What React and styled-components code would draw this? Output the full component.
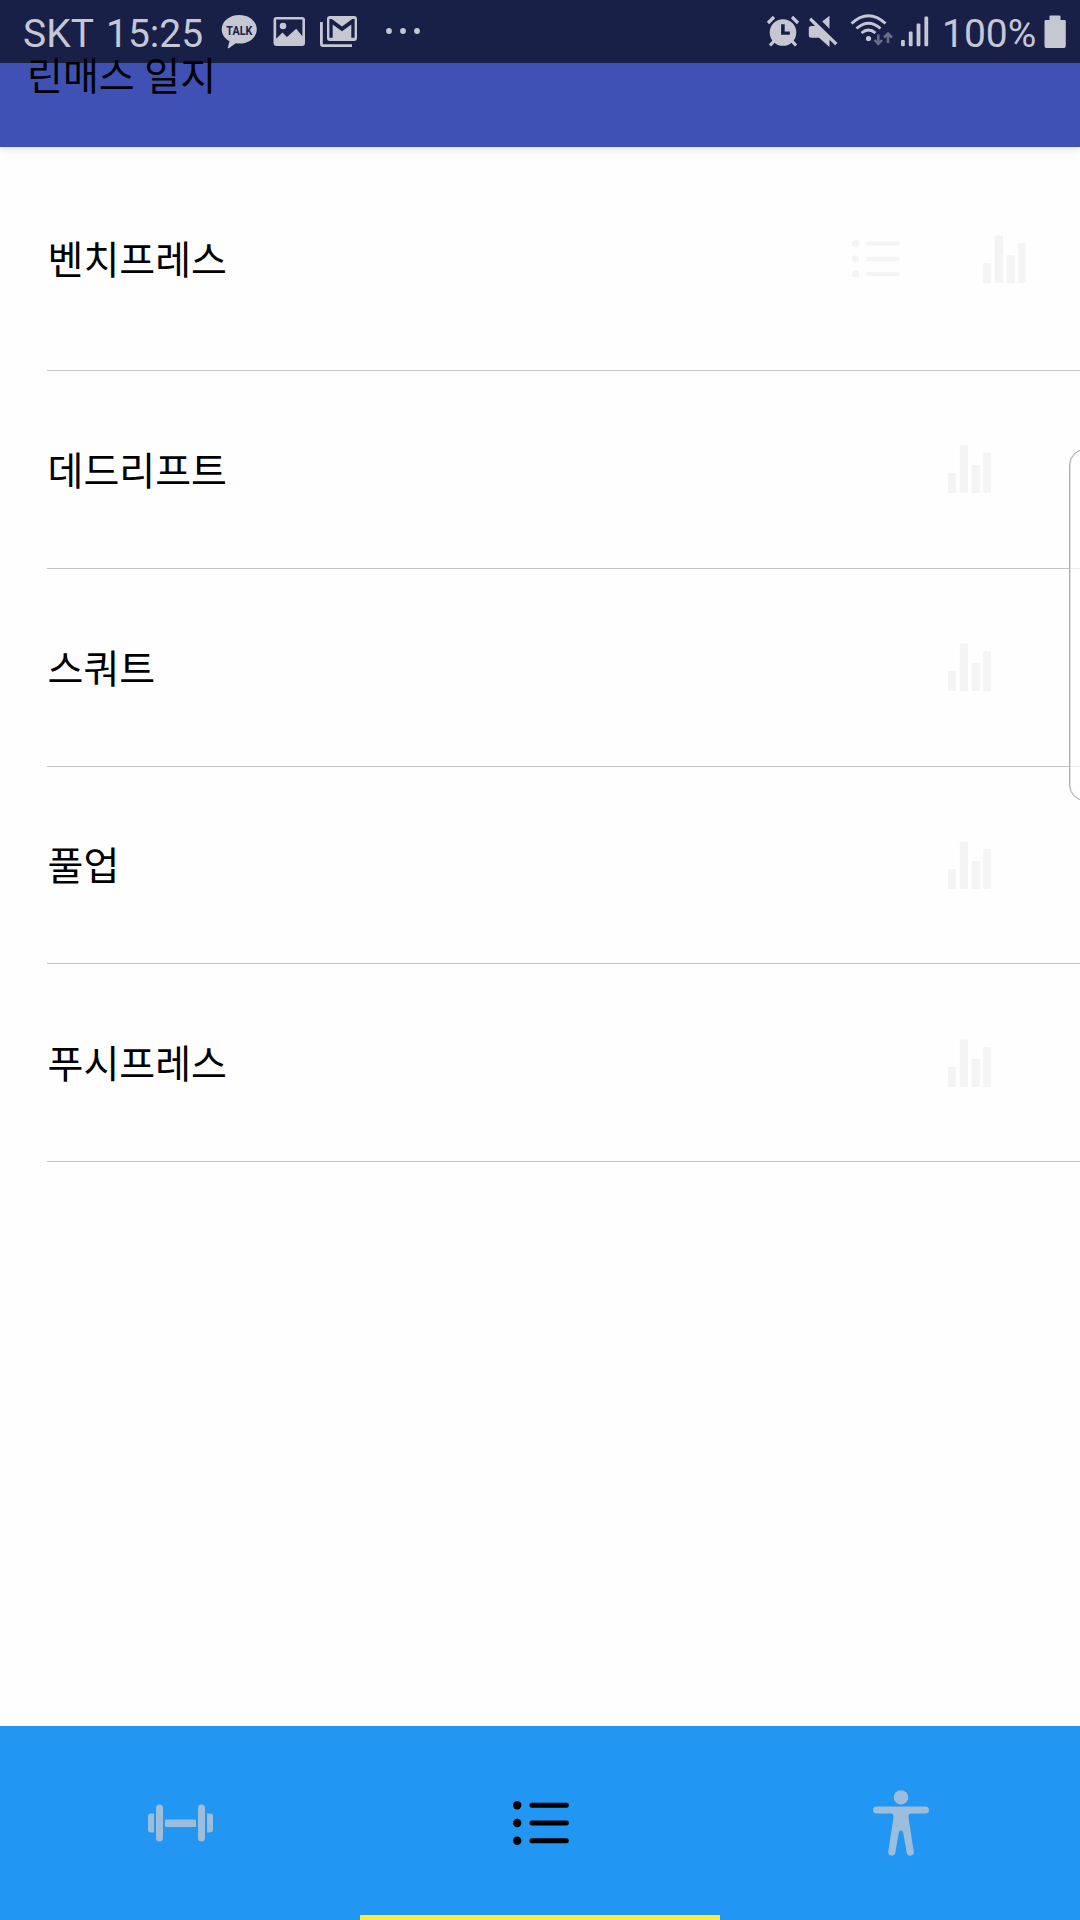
import React from "react";
import styled, { createGlobalStyle } from "styled-components";

const GlobalStyle = createGlobalStyle`
  * { box-sizing: border-box; }
  body { margin: 0; background: #fefefe; }
`;

const Screen = styled.div`
  position: relative;
  width: 1080px;
  height: 1920px;
  overflow: hidden;
  display: flex;
  flex-direction: column;
  background: #fefefe;
  color: #000;
  font-family: Roboto, "Noto Sans CJK KR", sans-serif;
`;

const StatusBar = styled.div`
  position: absolute;
  inset: 0 0 auto 0;
  z-index: 2;
  height: 63px;
  padding: 0 14px 0 23px;
  display: flex;
  justify-content: space-between;
  background: rgba(0, 0, 0, 0.6);
  color: #c5c7d3;
`;

const StatusGroup = styled.div`
  display: flex;
  align-items: flex-start;
`;

const StatusText = styled.span`
  width: ${(p) => p.$width}px;
  font-size: 39px;
  line-height: 46px;
  padding-top: 11px;
  white-space: nowrap;
`;

const StatusIcon = styled.svg`
  display: block;
  flex: none;
  height: 63px;
  width: ${(p) => p.$width}px;
  margin-left: ${(p) => p.$gap || 0}px;
  fill: currentColor;
`;

const Header = styled.header`
  position: relative;
  flex: none;
  height: 147px;
  padding: 48px 27px 0;
  background: #3f51b5;
  box-shadow: 0 2px 8px rgba(0, 0, 0, 0.12);
`;

const Title = styled.h1`
  margin: 0;
  font-size: 39px;
  line-height: 58px;
  font-weight: 400;
  white-space: nowrap;
`;

const List = styled.ul`
  flex: 1;
  margin: 0;
  padding: 0 0 0 47px;
  list-style: none;
`;

const Row = styled.li`
  display: flex;
  align-items: center;
  justify-content: space-between;
  height: ${(p) => (p.$first ? 224 : 197.75)}px;
  padding-right: ${(p) => (p.$first ? 54 : 89)}px;
  border-bottom: 1px solid #c4c4c4;
`;

const RowName = styled.span`
  padding: 5px 0 0 0.5px;
  font-size: 39px;
  line-height: 58px;
  font-weight: 400;
`;

const RowActions = styled.div`
  display: flex;
  align-items: center;
  gap: 83px;
  color: #f4f4f4;
`;

const Glyph = styled.svg`
  display: block;
  fill: currentColor;
`;

const EdgePanel = styled.div`
  position: absolute;
  z-index: 3;
  left: 1069px;
  top: 449px;
  width: 32px;
  height: 352px;
  border: 1px solid #acacac;
  border-radius: 16px;
  background: rgba(255, 255, 255, 0.7);
  box-shadow: inset 1px 0 0 #e2e2e2;
`;

const TabBar = styled.nav`
  flex: none;
  display: grid;
  grid-template-columns: repeat(3, 1fr);
  height: 194px;
  background: #2196f3;
`;

const Tab = styled.div`
  display: flex;
  align-items: center;
  justify-content: center;
  color: ${(p) => (p.$active ? "#000" : "#9cbddb")};
  padding: 5px 0 0 1px;
  border-bottom: 5px solid ${(p) => (p.$active ? "#ffeb3b" : "transparent")};
`;

const ListGlyph = ({ width, height }) => (
  <Glyph width={width} height={height} viewBox="0 0 56 44">
    {[4.2, 22, 39.8].map((y) => (
      <React.Fragment key={y}>
        <circle cx="4.2" cy={y} r="4.2" />
        <rect x="16.5" y={y - 2.5} width="39.3" height="5" rx="2.2" />
      </React.Fragment>
    ))}
  </Glyph>
);

const StatsGlyph = () => (
  <Glyph width="43" height="48" viewBox="0 0 43 48">
    <rect x="0" y="28" width="8" height="20" rx="1" />
    <rect x="11.8" y="0.4" width="8.2" height="47.6" rx="1" />
    <rect x="23.6" y="20" width="8.2" height="28" rx="1" />
    <rect x="35.2" y="8" width="7.8" height="40" rx="1" />
  </Glyph>
);

const DumbbellGlyph = () => (
  <Glyph width="65" height="38" viewBox="0 0 65 38">
    <path d="M6 9.5H3a3 3 0 0 0-3 3v13a3 3 0 0 0 3 3h3zM59 9.5h3a3 3 0 0 1 3 3v13a3 3 0 0 1-3 3h-3z" />
    <rect x="8" y="0.5" width="7" height="37" rx="3.5" />
    <rect x="50" y="0.5" width="7" height="37" rx="3.5" />
    <rect x="17" y="15.5" width="31" height="7.4" rx="1" />
  </Glyph>
);

const BodyGlyph = () => (
  <Glyph width="56" height="66" viewBox="0 0 56 66">
    <circle cx="28" cy="7.4" r="7.2" />
    <path d="M3.5 16.5h49a3.5 3.5 0 0 1 0 7H38.5c-2.5 0-3.2 1.6-3 4l5.3 34.2a3.6 3.6 0 0 1-7.1 1.1L30.2 43c-.5-3.4-3.9-3.4-4.4 0l-3.5 19.8a3.6 3.6 0 0 1-7.1-1.1L20.5 27.5c.2-2.4-.5-4-3-4H3.5a3.5 3.5 0 0 1 0-7z" />
  </Glyph>
);

const exercises = ["벤치프레스", "데드리프트", "스쿼트", "풀업", "푸시프레스"];

export default function App() {
  return (
    <Screen>
      <GlobalStyle />
      <StatusBar>
        <StatusGroup>
          <StatusText $width={83}>SKT</StatusText>
          <StatusText $width={113}>15:25</StatusText>
          <StatusIcon $width={40} viewBox="219 0 40 63">
            <path d="M239.3 15c-9.8 0-17.6 6.3-17.6 14.3 0 5.2 3.1 9.6 7.8 12l-1.7 6.2c-.2.7.5 1.1 1 .7l7-4.9c1.1.2 2.3.3 3.5.3 9.8 0 17.5-6.3 17.5-14.3S249.1 15 239.3 15z" />
            <text x="239.3" y="34.5" textAnchor="middle" textLength="26" lengthAdjust="spacingAndGlyphs" fontSize="12.5" fontWeight="700" fill="#192048">TALK</text>
          </StatusIcon>
          <StatusIcon $width={32} $gap={14} viewBox="273 0 32 63">
            <path fillRule="evenodd" d="M276.5 17h25.5a3 3 0 0 1 3 3v23a3 3 0 0 1-3 3h-25.5a3 3 0 0 1-3-3V20a3 3 0 0 1 3-3zm-.3 2.5v19.3l6.3-6.3 4.5 4.5 9.2-8.2 6.2 7.5V19.5zM283 22.7a3.3 3.3 0 1 1 0 6.600 3.300 3.300 0 0 1 0-6.600z" />
          </StatusIcon>
          <StatusIcon $width={38} $gap={15} viewBox="320 0 38 63">
            <path d="M320 22h2.8v22.2h29.200V47h-29a3 3 0 0 1-3-3z" />
            <path fillRule="evenodd" d="M330 16h24a3 3 0 0 1 3 3v19a3 3 0 0 1-3 3h-24a3 3 0 0 1-3-3V19a3 3 0 0 1 3-3zm-.6 3v18.8h3.3V24.5l9.3 6.7 9.3-6.7v13.3h3.3V19h-2.3L342 26.5 331.7 19z" />
          </StatusIcon>
          <StatusIcon $width={36} $gap={27} viewBox="385 0 36 63">
            <circle cx="389" cy="31" r="2.9" />
            <circle cx="403" cy="31" r="2.9" />
            <circle cx="417" cy="31" r="2.9" />
          </StatusIcon>
        </StatusGroup>
        <StatusGroup>
          <StatusIcon $width={34} viewBox="766 0 34 63">
            <path fillRule="evenodd" d="M783 19.2a13.3 13.3 0 1 1 0 26.6 13.3 13.3 0 0 1 0-26.6zm-1.9 5v10.6h8.8v-3.3h-5.2v-7.3z" />
            <path fill="none" stroke="currentColor" strokeWidth="3.2" d="M768 23l6-6M792 17l6 6M774 41l-4 4.5M792 41l4 4.5" />
          </StatusIcon>
          <StatusIcon $width={30} $gap={8} viewBox="808 0 30 63">
            <path d="M808.8 28.5a2.5 2.5 0 0 1 2.5-2.5h3.6l-5.8-6 2.1-2.6L837.5 43l-2.3 2.3-5.7-5.6V47l-10.5-9.3h-7.7a2.5 2.5 0 0 1-2.5-2.5zM822.2 21.5l7.3-5.7v13z" />
          </StatusIcon>
          <StatusIcon $width={43} $gap={12} viewBox="850 0 43 63">
            <path fill="none" stroke="currentColor" strokeWidth="2.8" d="M851.5 23.5q17-15.5 34 0M856.5 28.5q12-10.5 24 0M861.5 33q7-6 14 0" />
            <circle cx="868.5" cy="38.5" r="2.6" />
            <path fill="none" stroke="#696d87" strokeWidth="2.5" d="M878.3 34.5v9M874.5 40l3.8 4 3.8-4M888 43v-9M884 37.5l4-4 4 4" />
          </StatusIcon>
          <StatusIcon $width={28} $gap={8} viewBox="901 0 28 63">
            <rect x="901" y="40" width="3.8" height="6.3" rx="1.2" />
            <rect x="908.8" y="31.5" width="3.8" height="14.8" rx="1.2" />
            <rect x="916.6" y="23.5" width="3.8" height="22.8" rx="1.2" />
            <rect x="924.4" y="16.5" width="3.8" height="29.8" rx="1.2" />
          </StatusIcon>
          <StatusIcon as="span" $width={13} />
          <StatusText $width={102}>100%</StatusText>
          <StatusIcon $width={22} viewBox="1044.5 0 22 63">
            <path d="M1051 15.5h9a1 1 0 0 1 1 1V20h4a1.3 1.3 0 0 1 1.3 1.3V46a2 2 0 0 1-2 2h-17.3a2 2 0 0 1-2-2V21.3a1.3 1.3 0 0 1 1.3-1.3h3.7v-3.5a1 1 0 0 1 1-1z" />
          </StatusIcon>
        </StatusGroup>
      </StatusBar>
      <Header>
        <Title>린매스 일지</Title>
      </Header>
      <List>
        {exercises.map((name, i) => (
          <Row key={name} $first={i === 0}>
            <RowName>{name}</RowName>
            <RowActions>
              {i === 0 && <ListGlyph width={48} height={37.7} />}
              <StatsGlyph />
            </RowActions>
          </Row>
        ))}
      </List>
      <TabBar>
        <Tab><DumbbellGlyph /></Tab>
        <Tab $active><ListGlyph width={56} height={44} /></Tab>
        <Tab><BodyGlyph /></Tab>
      </TabBar>
      <EdgePanel />
    </Screen>
  );
}
